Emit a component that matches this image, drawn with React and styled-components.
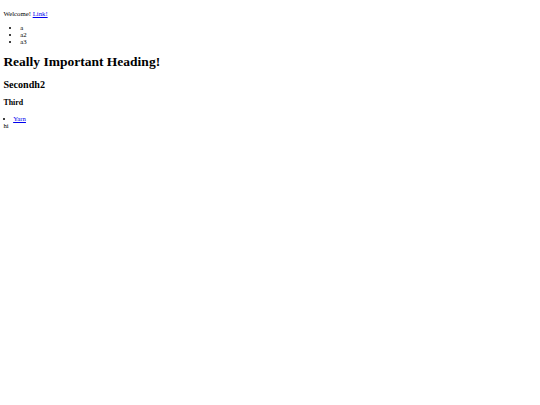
import { createGlobalStyle, styled } from "styled-components";

// the reference is a 1280px-wide page shrunk to 540px
const s = 540 / 1280;
const px = (n) => `${(n * s).toFixed(3)}px`;

const GlobalStyle = createGlobalStyle`
  body {
    margin: ${px(8)};
    font-family: "Liberation Serif", "Times New Roman", serif;
    font-size: ${px(16)};
    color: #000;
    background: #fff;
  }
`;

const Intro = styled.p`
  margin: ${px(16)} 0;
`;

const Anchor = styled.a`
  color: #0000ee;
  text-decoration: underline;
`;

const List = styled.ul`
  margin: ${px(16)} 0;
  padding-left: ${px(40)};
  list-style: disc;
`;

const Heading = styled.h1`
  font-size: ${px(32)};
  margin: ${px(21.44)} 0;
  font-weight: bold;
`;

const SubHeading = styled.h2`
  font-size: ${px(24)};
  margin: ${px(19.92)} 0;
  font-weight: bold;
`;

const MinorHeading = styled.h3`
  font-size: ${px(18.72)};
  margin: ${px(18.72)} 0;
  font-weight: bold;
`;

const InlineList = styled.ul`
  margin: 0;
  padding: 0;
  list-style: disc inside;
`;

function App() {
  return (
    <>
      <GlobalStyle />
      <Intro>
        Welcome! <Anchor href="#">Link!</Anchor>
      </Intro>
      <List>
        <li>a</li>
        <li>a2</li>
        <li>a3</li>
      </List>
      <Heading>Really Important Heading!</Heading>
      <SubHeading>Secondh2</SubHeading>
      <MinorHeading>Third</MinorHeading>
      <InlineList>
        <li>
          <Anchor href="#">Yarn</Anchor>
        </li>
      </InlineList>
      <div>hi</div>
    </>
  );
}

export default App;
